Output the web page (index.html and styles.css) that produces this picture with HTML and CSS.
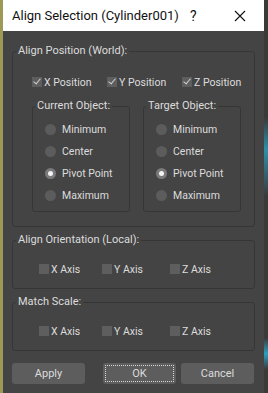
FILE: index.html
```html
<!DOCTYPE html>
<html>
  <head>
    <title>Align Selection</title>
    <link rel="stylesheet" href="styles.css">
  </head>
  <body>
    <div class="desk">
      <div class="edge-left"></div>
      <div class="window">
        <div class="titlebar">
          <span class="title">Align Selection (Cylinder001)</span>
          <span class="help">?</span>
          <span class="close">
            <svg width="12" height="12" viewBox="0 0 12 12"><path d="M1 1L11 11M11 1L1 11" stroke="#111" stroke-width="1.1" fill="none"/></svg>
          </span>
        </div>
        <div class="content">
          <fieldset class="group">
            <legend>Align Position (World):</legend>
            <div class="group-body pos-body">
              <div class="check-row pos-row">
                <label class="check"><span class="box on"></span>X Position</label>
                <label class="check"><span class="box on"></span>Y Position</label>
                <label class="check"><span class="box on"></span>Z Position</label>
              </div>
              <div class="sub-groups">
                <fieldset class="group sub">
                  <legend>Current Object:</legend>
                  <div class="group-body sub-body">
                    <div class="radio"><span class="dot"></span>Minimum</div>
                    <div class="radio"><span class="dot"></span>Center</div>
                    <div class="radio"><span class="dot on"></span>Pivot Point</div>
                    <div class="radio"><span class="dot"></span>Maximum</div>
                  </div>
                </fieldset>
                <fieldset class="group sub">
                  <legend>Target Object:</legend>
                  <div class="group-body sub-body">
                    <div class="radio"><span class="dot"></span>Minimum</div>
                    <div class="radio"><span class="dot"></span>Center</div>
                    <div class="radio"><span class="dot on"></span>Pivot Point</div>
                    <div class="radio"><span class="dot"></span>Maximum</div>
                  </div>
                </fieldset>
              </div>
            </div>
          </fieldset>

          <fieldset class="group group-axis">
            <legend>Align Orientation (Local):</legend>
            <div class="group-body axis-body">
              <div class="check-row axis-row">
                <label class="check"><span class="box"></span>X Axis</label>
                <label class="check"><span class="box"></span>Y Axis</label>
                <label class="check"><span class="box"></span>Z Axis</label>
              </div>
            </div>
          </fieldset>

          <fieldset class="group group-axis">
            <legend>Match Scale:</legend>
            <div class="group-body axis-body">
              <div class="check-row axis-row">
                <label class="check"><span class="box"></span>X Axis</label>
                <label class="check"><span class="box"></span>Y Axis</label>
                <label class="check"><span class="box"></span>Z Axis</label>
              </div>
            </div>
          </fieldset>

          <div class="buttons">
            <button type="button" class="btn">Apply</button>
            <button type="button" class="btn btn-ok">OK</button>
            <button type="button" class="btn">Cancel</button>
          </div>
        </div>
      </div>
      <div class="edge-right"></div>
    </div>
  </body>
</html>
```

FILE: styles.css
```css
body {
  margin: 0;
  padding: 0;
  background: #3b3b3b;
  font-family: Roboto, "Liberation Sans", Arial, sans-serif;
}
.desk {
  display: flex;
  height: 393px;
}
.edge-left {
  width: 3px;
  background: #9d9a55;
}
.edge-right {
  flex: 1;
  background: linear-gradient(180deg, #3a3a3a 0%, #3a3a3a 30%, #2e8fa8 38%, #3a3a3a 50%, #3a3a3a 86%, #2a9fbf 90%, #3a3a3a 94%);
}
.window {
  width: 261px;
  background: #444444;
  display: flex;
  flex-direction: column;
}
.titlebar {
  height: 31px;
  background: #fff;
  display: flex;
  align-items: center;
  padding: 0 18px 0 9px;
  color: #111;
}
.title {
  font-size: 13px;
  flex: 1;
  white-space: nowrap;
}
.help {
  font-size: 14px;
  width: 10px;
  margin-right: 34px;
}
.close {
  width: 12px;
  display: flex;
}
.content {
  padding: 13px 9px 0 9px;
  color: #dcdcdc;
  font-size: 10.5px;
}
.group {
  border: 1px solid #363636;
  border-radius: 3px;
  margin: 0;
  padding: 0;
  min-width: 0;
}
.group legend {
  padding: 0 2px;
  margin-left: 3px;
  font-size: 11px;
  line-height: 14px;
  color: #dcdcdc;
  white-space: nowrap;
}
.pos-body {
  padding: 17px 13px 14px 19px;
}
.check-row {
  display: grid;
  height: 14px;
  align-items: center;
}
.pos-row {
  grid-template-columns: 75px 75px auto;
}
.check {
  display: flex;
  align-items: center;
  gap: 2px;
  white-space: nowrap;
}
.box {
  width: 10px;
  height: 10px;
  background: #5e5e5e;
  position: relative;
}
.box.on::after {
  content: "";
  position: absolute;
  left: 3px;
  top: 0;
  width: 3px;
  height: 6px;
  border: solid #cfcfcf;
  border-width: 0 1.5px 1.5px 0;
  transform: rotate(40deg);
}
.sub-groups {
  display: grid;
  grid-template-columns: 98px 98px;
  gap: 13px;
  margin-top: 10px;
}
.sub legend {
  margin-left: 2px;
}
.sub-body {
  padding: 5px 0 5px 12px;
}
.radio {
  height: 22px;
  display: flex;
  align-items: center;
  gap: 6px;
}
.dot {
  width: 11px;
  height: 11px;
  border-radius: 50%;
  background: #5c5c5c;
  position: relative;
}
.dot.on {
  background: #7a7a7a;
}
.dot.on::after {
  content: "";
  position: absolute;
  left: 3px;
  top: 3px;
  width: 5px;
  height: 5px;
  border-radius: 50%;
  background: #f4f4f4;
}
.group-axis {
  margin-top: 6px;
}
.axis-body {
  padding: 15px 13px 12px 26px;
}
.axis-row {
  grid-template-columns: 63px 68px auto;
}
.buttons {
  display: flex;
  gap: 5px;
  margin-top: 12px;
  padding-right: 1px;
}
.btn {
  width: 73px;
  height: 21px;
  border: none;
  border-radius: 3px;
  background: #5d5d5d;
  color: #dcdcdc;
  font-family: inherit;
  font-size: 11px;
  padding: 0;
}
.btn-ok {
  margin-left: auto;
  outline: 1px dotted #d8d8d8;
  outline-offset: -3px;
}
```
